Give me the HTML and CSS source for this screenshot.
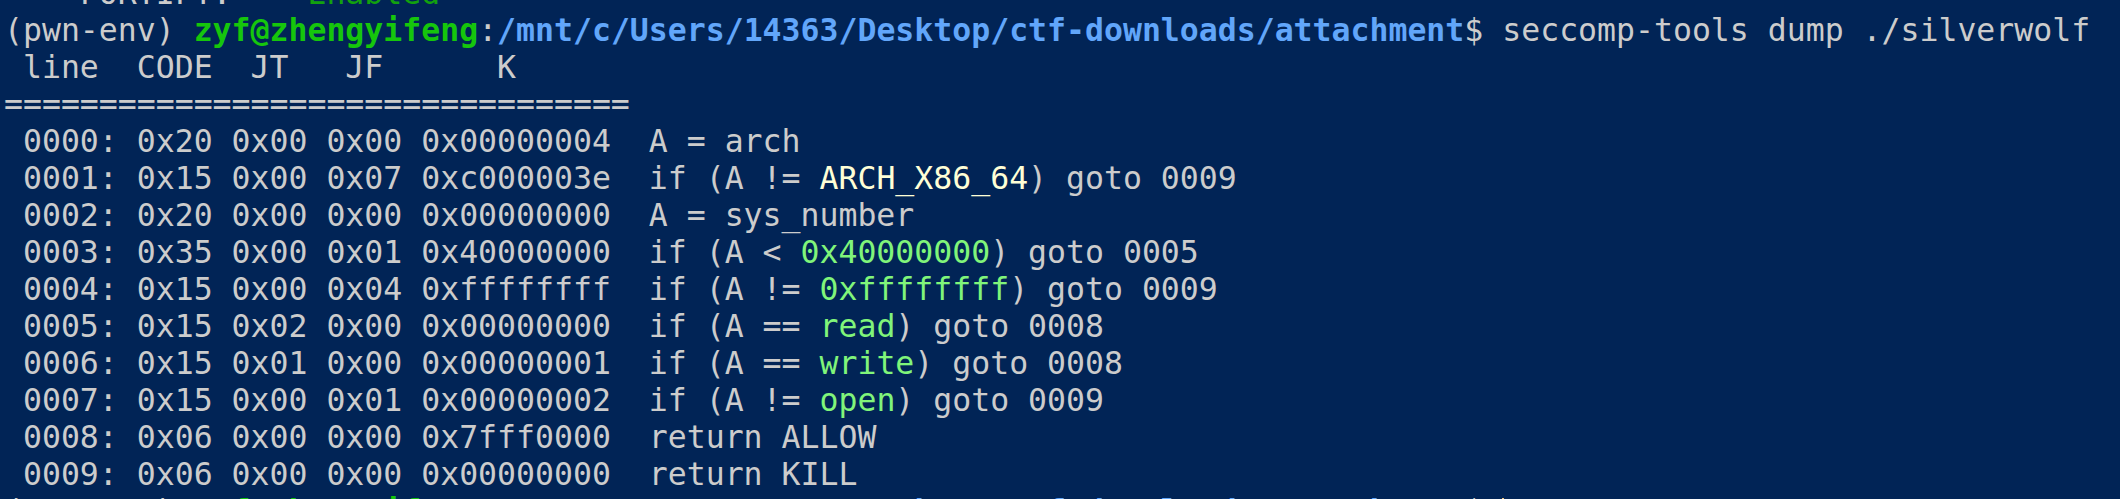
FILE: index.html
```html
<!DOCTYPE html>
<html lang="en">
<head>
<meta charset="utf-8">
<title>seccomp-tools dump</title>
<link rel="stylesheet" href="styles.css">
</head>
<body>
<div class="term">
<div class="row">    FORTIFY:    <span class="ok">Enabled</span></div>
<div class="row">(pwn-env) <span class="user">zyf@zhengyifeng</span>:<span class="path">/mnt/c/Users/14363/Desktop/ctf-downloads/attachment</span>$ seccomp-tools dump ./silverwolf</div>
<div class="row"> line  CODE  JT   JF      K</div>
<div class="row">=================================</div>
<div class="row"> 0000: 0x20 0x00 0x00 0x00000004  A = arch</div>
<div class="row"> 0001: 0x15 0x00 0x07 0xc000003e  if (A != <span class="arch">ARCH_X86_64</span>) goto 0009</div>
<div class="row"> 0002: 0x20 0x00 0x00 0x00000000  A = sys_number</div>
<div class="row"> 0003: 0x35 0x00 0x01 0x40000000  if (A &lt; <span class="hl">0x40000000</span>) goto 0005</div>
<div class="row"> 0004: 0x15 0x00 0x04 0xffffffff  if (A != <span class="hl">0xffffffff</span>) goto 0009</div>
<div class="row"> 0005: 0x15 0x02 0x00 0x00000000  if (A == <span class="hl">read</span>) goto 0008</div>
<div class="row"> 0006: 0x15 0x01 0x00 0x00000001  if (A == <span class="hl">write</span>) goto 0008</div>
<div class="row"> 0007: 0x15 0x00 0x01 0x00000002  if (A != <span class="hl">open</span>) goto 0009</div>
<div class="row"> 0008: 0x06 0x00 0x00 0x7fff0000  return ALLOW</div>
<div class="row"> 0009: 0x06 0x00 0x00 0x00000000  return KILL</div>
<div class="row">(pwn-env) <span class="user">zyf@zhengyifeng</span>:<span class="path">/mnt/c/Users/14363/Desktop/ctf-downloads/attachment</span>$ <span class="cursor"></span></div>
</div>
</body>
</html>
```

FILE: styles.css
```css
html, body {
  margin: 0;
  padding: 0;
  background: #012456;
  height: 499px;
  overflow: hidden;
}

.term {
  margin-top: -25px;
  padding-left: 4px;
  font-family: "DejaVu Sans Mono", "Liberation Mono", monospace;
  font-size: 31.5px;
  line-height: 37px;
  color: #cccccc;
}

.row {
  white-space: pre;
  height: 37px;
}

.ok {
  color: #13a10e;
}

.user {
  color: #16c60c;
  font-weight: bold;
}

.path {
  color: #61a6fa;
  font-weight: bold;
}

.arch {
  color: #ffffd6;
}

.hl {
  color: #80f57a;
}

.cursor {
  display: inline-block;
  width: 2px;
  height: 30px;
  background: #f2c27a;
  vertical-align: -6px;
}
```
